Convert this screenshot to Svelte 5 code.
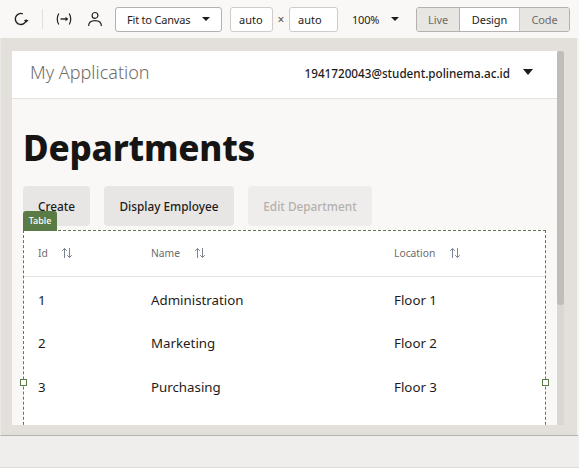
<script>
  const rows = [
    { id: 1, name: 'Administration', location: 'Floor 1' },
    { id: 2, name: 'Marketing', location: 'Floor 2' },
    { id: 3, name: 'Purchasing', location: 'Floor 3' }
  ];
  const columns = ['Id', 'Name', 'Location'];
</script>

<div class="shell">
  <header class="toolbar">
    <svg class="ic refresh" width="16" height="16" viewBox="0 0 16 16" fill="none" stroke="#222" stroke-width="1.4">
      <path d="M13.300 8.500A5.500 5.500 0 1 1 9.800 2.800" />
      <path d="M10.800 9h4.800l-2.400 2.700z" fill="#222" stroke="none" />
    </svg>
    <span class="divider"></span>
    <svg class="ic arrow" width="16" height="16" viewBox="0 0 16 16" fill="none" stroke="#222" stroke-width="1.2">
      <path d="M2.800 2.500C.8 6 .8 10 2.800 13.500M13.200 2.500c2 3.500 2 7.500 0 11" />
      <path d="M4.500 8h6" stroke-width="1.400" />
      <path d="M9.500 5.800 12.400 8l-2.900 2.200z" fill="#222" stroke="none" />
    </svg>
    <svg class="ic person" width="16" height="16" viewBox="0 0 16 16" fill="none" stroke="#222" stroke-width="1.200">
      <circle cx="8" cy="4.400" r="2.900" />
      <path d="M1.600 15c0-3.600 2.600-5.400 6.400-5.400s6.400 1.800 6.400 5.400" />
    </svg>
    <button class="select"><span>Fit to Canvas</span><span class="caret"></span></button>
    <span class="field first">auto</span>
    <span class="times">×</span>
    <span class="field second">auto</span>
    <span class="zoom">100%<span class="caret small"></span></span>
    <div class="segments">
      <span class="seg live">Live</span>
      <span class="seg design">Design</span>
      <span class="seg code">Code</span>
    </div>
  </header>

  <main class="canvas">
    <div class="page">
      <div class="apphead">
        <span class="appname">My Application</span>
        <span class="user">1941720043@student.polinema.ac.id</span>
        <span class="caret usercaret"></span>
      </div>
      <div class="content">
        <h1>Departments</h1>
        <div class="actions">
          <button class="act create">Create</button>
          <button class="act display">Display Employee</button>
          <button class="act edit">Edit Department</button>
        </div>
        <div class="table">
          <span class="tag">Table</span>
          <span class="handle left"></span>
          <span class="handle right"></span>
          <div class="row head">
            {#each columns as col}
              <div class="cell">
                <span class="label">{col}</span>
                <svg width="12" height="12" viewBox="0 0 12 12" fill="none" stroke="#7b8490" stroke-width="1">
                  <path d="M3.500 11V1.500M1.200 3.800 3.500 1.500l2.300 2.300" />
                  <path d="M8.500 1v9.500M6.200 8.200l2.300 2.300 2.300-2.300" />
                </svg>
              </div>
            {/each}
          </div>
          {#each rows as r}
            <div class="row">
              <div class="cell">{r.id}</div>
              <div class="cell">{r.name}</div>
              <div class="cell">{r.location}</div>
            </div>
          {/each}
        </div>
      </div>
    </div>
    <div class="scrollbar"><div class="thumb"></div></div>
  </main>

  <footer class="bottom"></footer>
</div>

<style>
  :global(body) {
    margin: 0;
    background: #f0eeec;
  }
  .shell {
    width: 579px;
    height: 468px;
    display: flex;
    flex-direction: column;
    overflow: hidden;
    font-family: "Noto Sans", "Open Sans", sans-serif;
    color: #1e1c1a;
  }
  .toolbar {
    height: 38px;
    flex: none;
    box-sizing: border-box;
    background: #faf8f6;
    display: flex;
    align-items: center;
    padding-left: 13px;
    font-size: 12px;
  }
  .ic {
    flex: none;
  }
  .divider {
    width: 1px;
    height: 20px;
    background: #e2dfdb;
    margin: 0 13px;
  }
  .person {
    margin-left: 15px;
  }
  button {
    font-family: inherit;
  }
  .select {
    margin-left: 12px;
    width: 107px;
    height: 25px;
    box-sizing: border-box;
    background: #fff;
    border: 1px solid #b5b2ae;
    border-radius: 3px;
    font-size: 11px;
    letter-spacing: -0.2px;
    color: #1e1c1a;
    display: flex;
    align-items: center;
    padding: 0 0 0 11px;
  }
  .caret {
    width: 0;
    height: 0;
    border-left: 5px solid transparent;
    border-right: 5px solid transparent;
    border-top: 5px solid #1e1c1a;
    display: inline-block;
  }
  .select .caret {
    margin-left: 12px;
    border-left-width: 4px;
    border-right-width: 4px;
    border-top-width: 4px;
  }
  .field {
    height: 25px;
    box-sizing: border-box;
    background: #fff;
    border: 1px solid #cfccc8;
    border-radius: 3px;
    display: flex;
    align-items: center;
    padding-left: 8px;
    font-size: 11px;
  }
  .field.first {
    width: 43px;
    margin-left: 8px;
  }
  .field.second {
    width: 49px;
  }
  .times {
    width: 16px;
    text-align: center;
    color: #55524e;
    font-size: 12px;
  }
  .zoom {
    margin-left: 14px;
    font-size: 11px;
    letter-spacing: -0.2px;
    width: 64px;
    display: flex;
    align-items: center;
    flex: none;
  }
  .zoom .small {
    margin-left: 12px;
    border-left-width: 4px;
    border-right-width: 4px;
    border-top-width: 4px;
  }
  .segments {
    display: flex;
    height: 25px;
    box-sizing: border-box;
    border: 1px solid #b5b2ae;
    border-radius: 3px;
    overflow: hidden;
    font-size: 11px;
    letter-spacing: -0.1px;
  }
  .seg {
    display: flex;
    align-items: center;
    justify-content: center;
    box-sizing: border-box;
    background: #e8e6e3;
    color: #6f6c68;
  }
  .live {
    width: 43px;
    border-right: 1px solid #b5b2ae;
  }
  .design {
    width: 60px;
    background: #fff;
    color: #1e1c1a;
    border-right: 1px solid #cfccc8;
  }
  .code {
    width: 49px;
  }
  .canvas {
    height: 398px;
    flex: none;
    box-sizing: border-box;
    background: #e3e0db;
    padding: 13px 0 10px 11px;
    display: flex;
    align-items: stretch;
    border-bottom: 1px solid #b5b3b0;
    border-right: 2px solid #f5f3f1;
    border-left: 1px solid #ebe9e5;
  }
  .page {
    width: 545px;
    flex: none;
    background: #faf8f6;
    overflow: hidden;
    display: flex;
    flex-direction: column;
  }
  .scrollbar {
    width: 7px;
    flex: none;
    background: #d8d7d3;
  }
  .thumb {
    height: 254px;
    background: #bfbdb8;
    border-radius: 3px;
  }
  .bottom {
    flex: 1;
    background: #f0eeec;
    border-bottom: 1px solid #dedcda;
  }
  .apphead {
    height: 48px;
    flex: none;
    box-sizing: border-box;
    background: #fff;
    border-bottom: 1px solid #e4e2df;
    display: flex;
    align-items: center;
    padding: 0 24px 5px 18px;
  }
  .appname {
    font-size: 18px;
    font-weight: 300;
    color: #716e6a;
  }
  .user {
    margin-left: auto;
    font-size: 11.700px;
    font-weight: 500;
    color: #1e1c1a;
    position: relative;
    top: 1px;
  }
  .usercaret {
    margin-left: 13px;
    border-left-width: 5.500px;
    border-right-width: 5.500px;
    border-top-width: 6px;
  }
  .content {
    flex: 1;
    padding: 0 11px;
    min-height: 0;
  }
  h1 {
    margin: 24px 0 0;
    font-size: 35px;
    line-height: 49px;
    font-weight: 800;
    letter-spacing: -0.2px;
    color: #161513;
  }
  .actions {
    display: flex;
    gap: 14px;
    margin-top: 14px;
  }
  .act {
    height: 40px;
    border: 0;
    border-radius: 4px;
    background: #e8e6e4;
    font-size: 11.800px;
    font-weight: 500;
    color: #1e1c1a;
    padding: 0;
  }
  .create {
    width: 67px;
  }
  .display {
    width: 130px;
  }
  .edit {
    width: 124px;
    background: #efedeb;
    color: #b4b1ad;
  }
  .table {
    position: relative;
    margin-top: 4px;
    width: 523px;
    height: 210px;
    box-sizing: border-box;
    background: #fff;
    border: 1px dashed #5f7a4b;
    border-bottom: 0;
  }
  .tag {
    position: absolute;
    left: -1px;
    top: -20px;
    width: 34px;
    height: 20px;
    background: #5a7a46;
    color: #fff;
    font-size: 9px;
    font-weight: 500;
    line-height: 19px;
    text-align: center;
    border-radius: 3px 3px 0 0;
  }
  .handle {
    position: absolute;
    top: 148px;
    width: 5px;
    height: 5px;
    background: #fff;
    border: 1px solid #5a7a46;
  }
  .handle.left {
    left: -4px;
  }
  .handle.right {
    right: -4px;
  }
  .row {
    display: grid;
    grid-template-columns: 113px 243px 1fr;
    padding-left: 14px;
    height: 43.500px;
    align-items: center;
    font-size: 13.300px;
    color: #1e1c1a;
  }
  .row.head {
    height: 46px;
    margin-bottom: 1px;
    padding-bottom: 1px;
    box-sizing: border-box;
    border-bottom: 1px solid #e4e2df;
    font-size: 10.300px;
    color: #6f6c68;
  }
  .head .cell {
    display: flex;
    align-items: center;
  }
  .head .label {
    width: 43px;
    flex: none;
  }
  .head .cell:first-child .label {
    width: 23px;
  }
  .head .cell:nth-child(3) .label {
    width: 55px;
  }
</style>
